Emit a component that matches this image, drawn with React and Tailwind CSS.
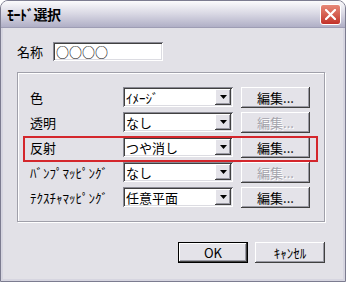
import React from 'react';

const raised =
  'bg-[#e4e3e9] shadow-[inset_-1px_-1px_#404040,inset_1px_1px_#ffffff,inset_-2px_-2px_#9a9aa4]';
const sunken =
  'bg-white shadow-[inset_1px_1px_#8a8a94,inset_-1px_-1px_#ffffff,inset_2px_2px_#404040,inset_-2px_-2px_#dcdce2]';

const Arrow = () => (
  <div className={`w-[16px] h-[16px] flex items-center justify-center ${raised}`}>
    <svg width="7" height="4" viewBox="0 0 7 4">
      <path d="M0 0h7L3.5 4z" fill="#000" />
    </svg>
  </div>
);

const Select = ({ value }) => (
  <div className={`w-[110px] h-[20px] flex items-center p-[2px] ${sunken}`}>
    <span className="flex-1 pl-[1px] text-[13px] leading-none text-black">{value}</span>
    <Arrow />
  </div>
);

const Button = ({ children, disabled, width = 'w-[69px]', isDefault }) => (
  <div
    className={`${width} h-[21px] flex items-center justify-center text-[13px] leading-none ${
      isDefault ? 'border border-black' : ''
    } ${raised} ${disabled ? 'text-[#a4a4ac] [text-shadow:1px_1px_#ffffff]' : 'text-black'}`}
  >
    {children}
  </div>
);

const rows = [
  { label: '色', value: 'ｲﾒｰｼﾞ', disabled: false },
  { label: '透明', value: 'なし', disabled: true },
  { label: '反射', value: 'つや消し', disabled: false },
  { label: 'ﾊﾞﾝﾌﾟﾏｯﾋﾟﾝｸﾞ', value: 'なし', disabled: true },
  { label: 'ﾃｸｽﾁｬﾏｯﾋﾟﾝｸﾞ', value: '任意平面', disabled: false },
];

export default function App() {
  return (
    <div className="w-[346px] h-[282px] flex flex-col bg-[#e2e1e7] border border-[#7c7c90] rounded-t-[8px] overflow-hidden font-['Noto_Sans_CJK_JP',sans-serif] text-black">
      {/* Title bar */}
      <div className="h-[27px] shrink-0 flex items-center justify-between pl-[6px] pr-[4px] bg-gradient-to-b from-[#fbfbfc] via-[#d8d7e3] to-[#b0afc6] border-b border-[#9e9db4]">
        <span className="text-[14px] font-bold leading-none tracking-[-0.5px]">ﾓｰﾄﾞ選択</span>
        <div className="w-[21px] h-[21px] rounded-[3px] border border-white bg-gradient-to-b from-[#e68878] to-[#c22f28] flex items-center justify-center">
          <svg width="11" height="11" viewBox="0 0 11 11">
            <path d="M1 1l9 9M10 1l-9 9" stroke="#fff" strokeWidth="2.2" strokeLinecap="square" />
          </svg>
        </div>
      </div>

      {/* Body */}
      <div className="flex-1 flex flex-col border-x-[2px] border-b-[2px] border-[#d6d5e0] pl-[14px] pt-[14px]">
        <div className="flex items-center h-[19px]">
          <span className="w-[36px] text-[13px] leading-none">名称</span>
          <div className={`w-[110px] h-[19px] flex items-center pl-[3px] text-[13px] leading-none font-medium ${sunken}`}>
            ○○○○
          </div>
        </div>

        {/* Group box */}
        <div className="relative mt-[11px] w-[308px] h-[150px] border border-[#a0a0aa] shadow-[inset_1px_1px_#ffffff,1px_1px_#ffffff] pl-[12px] pt-[14px] flex flex-col gap-[5px]">
          {rows.map((row) => (
            <div key={row.label} className="flex items-center h-[20px]">
              <span className="w-[93px] text-[13px] leading-none whitespace-nowrap">{row.label}</span>
              <Select value={row.value} />
              <div className="ml-[8px]">
                <Button disabled={row.disabled}>編集...</Button>
              </div>
            </div>
          ))}
          <div className="absolute left-[5px] top-[63px] w-[295px] h-[26px] border-2 border-[#d4262c]" />
        </div>

        <div className="w-[308px] flex justify-end gap-[7px] mt-[20px]">
          <Button width="w-[70px]" isDefault>OK</Button>
          <Button width="w-[70px]">ｷｬﾝｾﾙ</Button>
        </div>
      </div>
    </div>
  );
}
